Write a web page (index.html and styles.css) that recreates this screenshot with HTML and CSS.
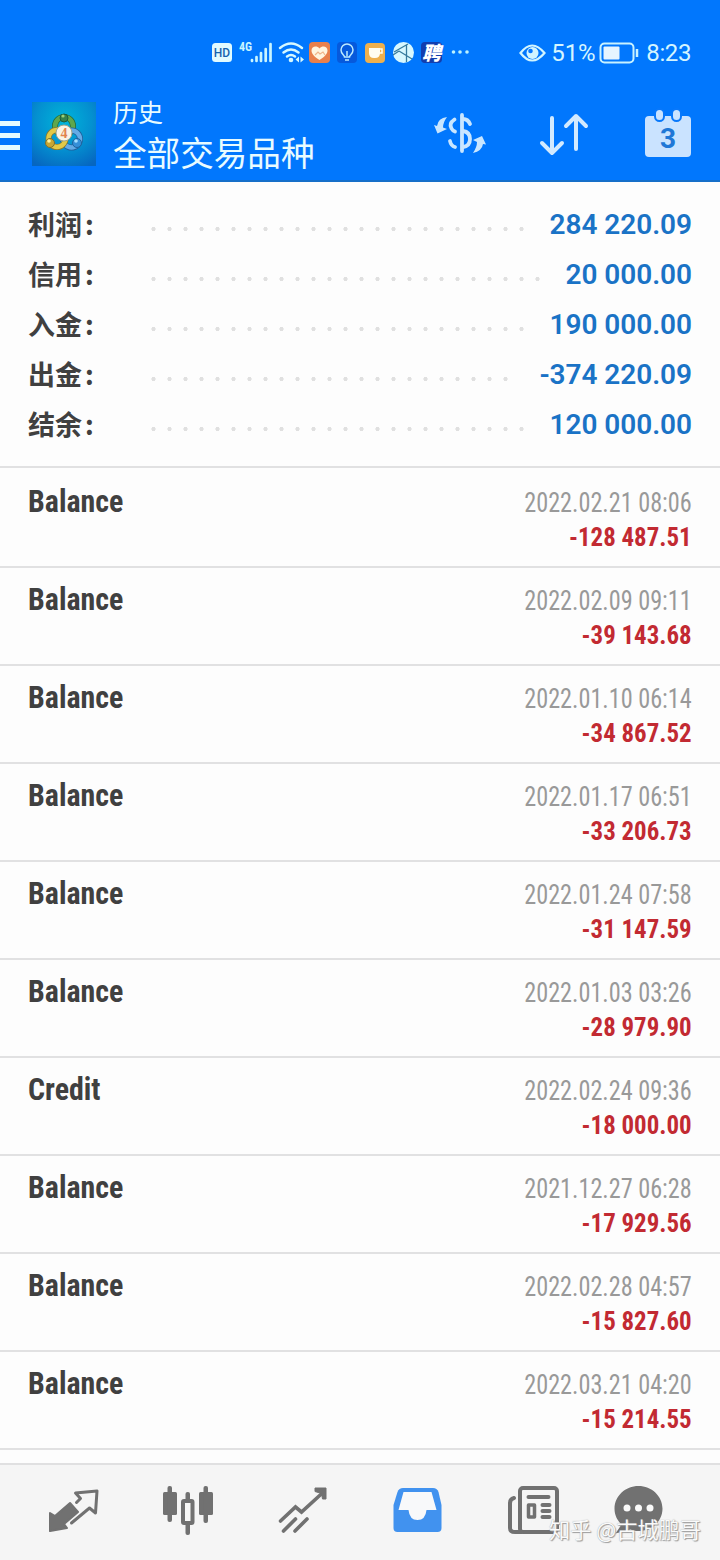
FILE: index.html
```html
<!DOCTYPE html>
<html lang="zh-CN">
<head>
<meta charset="utf-8">
<title>历史</title>
<link rel="stylesheet" href="styles.css">
</head>
<body>
<div class="screen">
  <header class="header">
    <div class="status">
      <svg class="status-icons" width="260" height="32" viewBox="210 36 260 32">
        <rect x="212" y="43" width="20" height="19" rx="3.5" fill="#e2fbff"/>
        <text x="222" y="57" class="hd">HD</text>
        <text x="239" y="51" class="net">4G</text>
        <g stroke="#c9f5ff" stroke-width="2.700" stroke-linecap="round">
          <path d="M252 61v-1M256.500 61v-4M261 61v-8M265.700 61V49M270.500 61V44"/>
        </g>
        <g fill="none" stroke="#d5f8ff" stroke-width="2.500" stroke-linecap="round">
          <path d="M280 48q11-9 22 0M283.500 52.500q7.500-6 15 0M287 56.500q4-3 8 0"/>
        </g>
        <circle cx="291" cy="60" r="2.300" fill="#d5f8ff"/>
        <path d="M299 56.500v6l-3.500-3zM300.500 56.500v6l3.500-3z" fill="#d5f8ff"/>
        <rect x="309" y="42" width="21" height="21" rx="4" fill="#e8804c"/>
        <path d="M319.500 60c-4-2.500-8-5.500-8-9.500s5-5.500 8-2c3-3.500 8-2 8 2s-4 7-8 9.500z" fill="#fff5df"/>
        <path d="M315 55l3-3 2 2 3-2 2 3" fill="none" stroke="#efb58a" stroke-width="1.200"/>
        <rect x="337" y="42" width="20" height="21" rx="4" fill="#0659dc"/>
        <path d="M344.500 57c0-2-3.500-3-3.500-7a6 6 0 0 1 12 0c0 4-3.500 5-3.500 7zM345 60h4M347 56v-5" fill="none" stroke="#bceaff" stroke-width="1.500"/>
        <rect x="365" y="43" width="20" height="20" rx="4" fill="#eeb04d"/>
        <path d="M369 48h11v5q0 5-5 5h-1q-5 0-5-5z" fill="#fffdf0"/>
        <path d="M380 49h2v4h-3" fill="none" stroke="#fffdf0" stroke-width="1.500"/>
        <circle cx="403.500" cy="52.500" r="10.500" fill="#d7f8ff"/>
        <path d="M394 52l14-8M399 51l13 8M406.500 45v17M393 55l6-4" fill="none" stroke="#357a9c" stroke-width="1.300"/>
        <rect x="421" y="42" width="21" height="21" rx="4" fill="#123eae"/>
        <text x="431.500" y="60" class="hire">聘</text>
        <g fill="#bcf2ff"><circle cx="453.500" cy="52" r="1.800"/><circle cx="460" cy="52" r="1.800"/><circle cx="467" cy="52" r="1.800"/></g>
      </svg>
      <div class="status-right">
        <svg width="27" height="20" viewBox="0 0 27 20">
          <path d="M1.500 10Q13-5 25.500 10Q13 25 1.500 10z" fill="none" stroke="#d2f5ff" stroke-width="2.200"/>
          <circle cx="13.500" cy="10" r="6" fill="#d2f5ff"/><circle cx="11.500" cy="8" r="2.300" fill="#0878ff"/>
        </svg>
        <span class="percent">51%</span>
        <svg class="battery" width="41" height="22" viewBox="0 0 41 22">
          <rect x="1.500" y="1.500" width="33" height="19" rx="4" fill="none" stroke="#c8f2ff" stroke-width="2"/>
          <rect x="4.500" y="4.500" width="16" height="13" rx="1" fill="#e6f5ff"/>
          <path d="M38 7v8" stroke="#c8f2ff" stroke-width="2.500"/>
        </svg>
        <span class="clock">8:23</span>
      </div>
    </div>
    <div class="toolbar">
      <div class="menu"><i></i><i></i><i></i></div>
      <svg class="logo" width="64" height="64" viewBox="0 0 64 64">
        <defs>
          <radialGradient id="sky" cx=".5" cy=".3" r=".8"><stop offset="0" stop-color="#00b5da"/><stop offset=".55" stop-color="#0490d0"/><stop offset="1" stop-color="#0666c0"/></radialGradient>
        </defs>
        <rect width="64" height="64" fill="url(#sky)"/>
        <g fill="none">
          <circle cx="32" cy="24" r="9" stroke="#23693a" stroke-width="6"/><circle cx="32" cy="24" r="9" stroke="#5fa74e" stroke-width="4.500"/>
          <circle cx="39.500" cy="37" r="8.500" stroke="#205f9c" stroke-width="6"/><circle cx="39.500" cy="37" r="8.500" stroke="#64abe6" stroke-width="4.500"/>
          <circle cx="25" cy="36.500" r="8.500" stroke="#89782d" stroke-width="6"/><circle cx="25" cy="36.500" r="8.500" stroke="#e2c947" stroke-width="4.500"/>
        </g>
        <g stroke-width="1"><circle cx="32" cy="16" r="4" fill="#36804a" stroke="#1c5a3c"/><circle cx="18" cy="41" r="4.500" fill="#c7a633" stroke="#7b6e30"/><circle cx="45" cy="41" r="4.500" fill="#358fd8" stroke="#20629c"/></g>
        <circle cx="31" cy="14" r="1.600" fill="#9bcf78"/><circle cx="17" cy="39" r="1.800" fill="#fff3a0"/><circle cx="44" cy="39" r="1.800" fill="#a4dfff"/>
        <circle cx="32" cy="31" r="8" fill="#f8f3e6" stroke="#a1a38a"/>
        <text x="32" y="36" class="four">4</text>
      </svg>
      <div class="titles"><div class="title">历史</div><div class="subtitle">全部交易品种</div></div>
      <svg class="actions" width="270" height="60" viewBox="430 104 270 60">
        <g fill="none" stroke="#c9e6ff" stroke-width="3.800" stroke-linecap="round">
          <path d="M462 115v36"/>
          <path d="M463 119q5 0 7 5M454.500 119.500q-6 4-3 9 1 2 3.500 3M463 131q7 1 7 8t-7 8M450 141q1 5 5 6"/>
        </g>
        <path d="M447 117q-9 1-10 9l-3-1 3.500 8.500 9.500-4.500-4-1.500q0-5 4-10.500zM473 153q9-2 10-9l3 .5-4-8.500-9 4 4 2q0 5-4 11z" fill="#c9e6ff"/>
        <path d="M552 118v35M542 143l10 10 10-10M576 149v-33M566 126l10-10 10 10" fill="none" stroke="#d2eaff" stroke-width="4" stroke-linecap="round" stroke-linejoin="round"/>
        <rect x="645" y="116" width="46" height="41" rx="4" fill="#cae3ff"/>
        <g fill="#cae3ff" stroke="#0878fb" stroke-width="2"><rect x="655" y="109" width="9" height="12" rx="4.500"/><rect x="672" y="109" width="9" height="12" rx="4.500"/></g>
        <text x="668" y="148" class="day">3</text>
      </svg>
    </div>
  </header>

  <section class="summary">
    <div class="sum"><b>利润<em>:</em></b><i class="dots n24"></i><span>284 220.09</span></div>
    <div class="sum"><b>信用<em>:</em></b><i class="dots n25"></i><span>20 000.00</span></div>
    <div class="sum"><b>入金<em>:</em></b><i class="dots n24"></i><span>190 000.00</span></div>
    <div class="sum"><b>出金<em>:</em></b><i class="dots n23"></i><span>-374 220.09</span></div>
    <div class="sum"><b>结余<em>:</em></b><i class="dots n24"></i><span>120 000.00</span></div>
  </section>

  <main class="deals">
    <div class="deal first"><div class="kind">Balance</div><div class="info"><time>2022.02.21 08:06</time><div class="amount">-128 487.51</div></div></div>
    <div class="deal"><div class="kind">Balance</div><div class="info"><time>2022.02.09 09:11</time><div class="amount">-39 143.68</div></div></div>
    <div class="deal"><div class="kind">Balance</div><div class="info"><time>2022.01.10 06:14</time><div class="amount">-34 867.52</div></div></div>
    <div class="deal"><div class="kind">Balance</div><div class="info"><time>2022.01.17 06:51</time><div class="amount">-33 206.73</div></div></div>
    <div class="deal"><div class="kind">Balance</div><div class="info"><time>2022.01.24 07:58</time><div class="amount">-31 147.59</div></div></div>
    <div class="deal"><div class="kind">Balance</div><div class="info"><time>2022.01.03 03:26</time><div class="amount">-28 979.90</div></div></div>
    <div class="deal"><div class="kind">Credit</div><div class="info"><time>2022.02.24 09:36</time><div class="amount">-18 000.00</div></div></div>
    <div class="deal"><div class="kind">Balance</div><div class="info"><time>2021.12.27 06:28</time><div class="amount">-17 929.56</div></div></div>
    <div class="deal"><div class="kind">Balance</div><div class="info"><time>2022.02.28 04:57</time><div class="amount">-15 827.60</div></div></div>
    <div class="deal"><div class="kind">Balance</div><div class="info"><time>2022.03.21 04:20</time><div class="amount">-15 214.55</div></div></div>
  </main>

  <nav class="nav">
    <svg width="720" height="95" viewBox="0 1465 720 95">
      <path d="M50 1513l5 3 15-13 8 9-14 12 3 4-17 3z" fill="#717171" stroke="#717171" stroke-width="2" stroke-linejoin="round"/>
      <path d="M76.500 1502.500l4-4-5-5.500 21.500-2-1.500 22-6-5-18 15" fill="none" stroke="#717171" stroke-width="3" stroke-linecap="round" stroke-linejoin="round"/>
      <g fill="#717171"><rect x="163" y="1492" width="14" height="23" rx="1.500"/><rect x="167.500" y="1486" width="4.500" height="36" rx="2"/><rect x="199" y="1492" width="14" height="23" rx="1.500"/><rect x="203.500" y="1486" width="4.500" height="37" rx="2"/><rect x="185.500" y="1492" width="4.500" height="43" rx="2"/></g>
      <rect x="183" y="1501" width="9.500" height="22" fill="#f8f8f7" stroke="#717171" stroke-width="4" rx="1"/>
      <path d="M280.500 1521l15-14 6 5 22-20M283.500 1531l12-12M295 1531l12-12" fill="none" stroke="#717171" stroke-width="3.600" stroke-linecap="round"/>
      <path d="M315 1488h11v11h-3.500l-1-5.500-6.500-2z" fill="#717171" stroke="#717171" stroke-linejoin="round"/>
      <path fill="#4192ef" d="M403 1488h30q4 0 5.500 4l3 13v23q0 4-4 4h-40q-4 0-4-4v-23l4-13q1.500-4 5.500-4z"/>
      <path fill="#f8f9fa" d="M403.500 1492l-5 18h10q1 10 9 10t9-10h10l-5-18z"/>
      <g fill="none" stroke="#717171" stroke-width="4" stroke-linecap="round" stroke-linejoin="round">
        <rect x="520" y="1488" width="37" height="44" rx="3"/>
        <path d="M514 1498q-4 1-4 5v25q0 4 5 4h7M528.500 1497h20M542.500 1505h7M542.500 1511h7M542.500 1517h7"/>
        <rect x="528.500" y="1505" width="6" height="12" stroke-width="3.500"/>
      </g>
      <path d="M638.500 1486c13 0 24 10 24 22.500s-10 22.500-24 22.500c-3 0-5-.5-8-1.500l-15 4 6-9c-4-4-7-9-7-16 0-12.500 11-22.500 24-22.500z" fill="#717171"/>
      <g fill="#fafafa"><circle cx="627" cy="1508" r="3.500"/><circle cx="638.500" cy="1508" r="3.500"/><circle cx="650" cy="1508" r="3.500"/></g>
    </svg>
    <div class="watermark">知乎 @古城鹏哥</div>
  </nav>
</div>
</body>
</html>
```
FILE: styles.css
```css
* { box-sizing: border-box; }
body { margin: 0; font-family: Roboto, "Noto Sans CJK SC", sans-serif; }
.screen { width: 720px; height: 1560px; background: #fdfdfd; display: flex; flex-direction: column; overflow: hidden; }

.header { height: 182px; background: #0177fd; border-bottom: 2px solid #166fc9; flex: none; }
.status { height: 84px; padding: 36px 29px 0 210px; display: flex; justify-content: space-between; align-items: flex-start; }
.status-right { display: flex; align-items: center; height: 33px; color: #d4f5ff; }
.percent { font: 24px/32px Roboto, sans-serif; margin: 1px 0 0 5px; letter-spacing: -.2px; }
.battery { margin: 0 0 0 4px; }
.clock { font: 24px/32px Roboto, sans-serif; margin: 1px 0 0 6px; letter-spacing: -.4px; }
.hd { font: 500 12px Roboto, sans-serif; text-anchor: middle; fill: #1663ae; }
.net { font: bold 12px "Roboto Condensed", Roboto, sans-serif; font-stretch: 75%; fill: #c9f5ff; }
.hire { font: italic 900 19px "Noto Sans CJK SC", sans-serif; text-anchor: middle; fill: #fff; }

.toolbar { height: 96px; display: flex; align-items: flex-start; }
.menu { width: 20px; margin-top: 37px; display: grid; gap: 7px; }
.menu i { height: 5px; background: #e4fbff; }
.logo { margin: 18px 0 0 12px; }
.four { font: bold 14px "Liberation Serif", serif; fill: #e1834d; text-anchor: middle; }
.titles { margin: 11px 0 0 17px; color: #e8fbff; font-family: "Noto Sans CJK SC", sans-serif; white-space: nowrap; flex: 1; }
.title { font-size: 25px; line-height: 32px; }
.subtitle { font-size: 33.6px; line-height: 50px; }
.actions { margin: 20px 20px 0 0; }
.day { font: bold 28px Roboto, sans-serif; fill: #2077d6; text-anchor: middle; }

.summary { height: 284px; padding: 17px 28px 0; flex: none; }
.sum { height: 50px; display: flex; align-items: center; }
.sum b { width: 122px; font: bold 27px/50px "Noto Sans CJK SC", sans-serif; color: #404040; }
.sum em { font-style: normal; margin-left: 3px; }
.sum span { margin: 2px 0 0 auto; font: 600 28px/50px Roboto, sans-serif; letter-spacing: -.05px; color: #1a73c6; }
.dots { height: 4px; margin-top: 10px; background: radial-gradient(circle at 3.5px 2px, #e0e0e0 0 1.8px, transparent 2.4px) 0 0 / 16px 4px repeat-x; }
.n23 { width: 360px; }
.n24 { width: 376px; }
.n25 { width: 392px; }

.deals { height: 997px; border-top: 2px solid #e1e1e2; flex: none; }
.deal { height: 98px; padding: 16px 28px 0; border-bottom: 2px solid #e1e1e2; display: flex; justify-content: space-between; font-family: "Roboto Condensed", Roboto, sans-serif; font-stretch: 75%; }
.first { height: 100px; padding-top: 18px; }
.kind { font-size: 31px; line-height: 32px; font-weight: 700; color: #404040; transform: scaleX(.965); transform-origin: left; }
.info { text-align: right; }
.info time { display: block; font-size: 27px; line-height: 34px; color: #999; transform: scaleX(.897); transform-origin: right; }
.amount { font-size: 26px; line-height: 34px; font-weight: 700; color: #c22a32; transform: scaleX(.958); transform-origin: right; }

.nav { position: relative; height: 97px; background: #f5f5f5; border-top: 2px solid #e0e0e1; flex: none; }
.nav svg { display: block; }
.watermark { position: absolute; right: 19px; bottom: 16px; font: 21.200px/30px "Noto Sans CJK SC", sans-serif; color: #fafafa; text-shadow: 1px 1px 1px #999, 0 0 1px #999; white-space: nowrap; }
```
